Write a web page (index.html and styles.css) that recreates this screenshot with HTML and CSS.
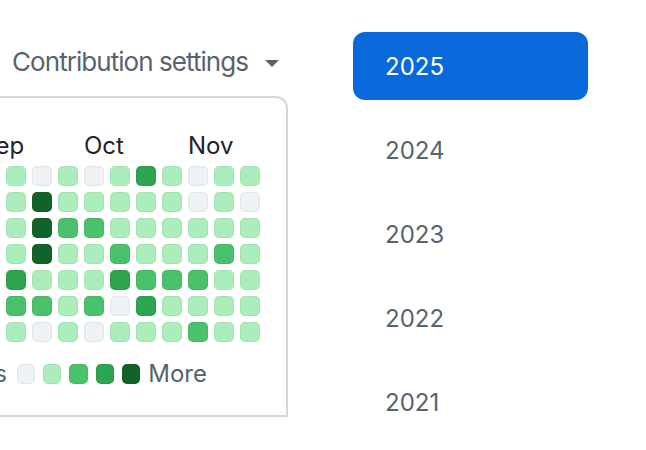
FILE: index.html
```html
<!DOCTYPE html>
<html lang="en">
<head>
<meta charset="utf-8">
<title>Contributions</title>
<link rel="stylesheet" href="styles.css">
</head>
<body>
<div class="page">
  <div class="left">
    <div class="settings">
      <span class="settings-label">Contribution settings</span>
      <svg class="caret" width="14" height="7" viewBox="0 0 14 7"><path d="M0 0h14L7 7z" fill="#59636e"/></svg>
    </div>
    <div class="box">
      <div class="months">
        <span class="month m-sep">Sep</span>
        <span class="month m-oct">Oct</span>
        <span class="month m-nov">Nov</span>
      </div>
      <div class="grid" id="grid"></div>
      <div class="legend">
        <span class="legend-text less">Less</span>
        <span class="cell l0"></span>
        <span class="cell l1"></span>
        <span class="cell l2"></span>
        <span class="cell l3"></span>
        <span class="cell l4"></span>
        <span class="legend-text">More</span>
      </div>
    </div>
  </div>
  <div class="years">
    <a class="year active">2025</a>
    <a class="year">2024</a>
    <a class="year">2023</a>
    <a class="year">2022</a>
    <a class="year">2021</a>
  </div>
</div>
<script src="script.js"></script>
</body>
</html>
```
FILE: script.js
```js
var rows = [
  "111010131011",
  "111411111010",
  "111422111111",
  "111411211121",
  "113111322211",
  "112212031111",
  "111010111211"
];
var grid = document.getElementById('grid');
rows.forEach(function (r) {
  for (var i = 0; i < r.length; i++) {
    var c = document.createElement('span');
    c.className = 'cell l' + r[i];
    grid.appendChild(c);
  }
});
```
FILE: styles.css
```css
html, body {
  margin: 0;
  padding: 0;
  background: #ffffff;
}
body {
  font-family: Inter, "Noto Sans", sans-serif;
  overflow: hidden;
  width: 646px;
  height: 450px;
}
.page {
  display: flex;
  align-items: flex-start;
}
.left {
  width: 288px;
  flex: none;
  padding-top: 45px;
}
.settings {
  display: flex;
  align-items: center;
  justify-content: flex-end;
  gap: 17px;
  padding-right: 9px;
  height: 34px;
  color: #59636e;
  font-size: 26px;
  letter-spacing: -0.95px;
  line-height: 34px;
  white-space: nowrap;
}
.caret {
  flex: none;
  margin-top: 2px;
}
.box {
  margin-top: 17px;
  margin-left: -80px;
  border: 2px solid #d1d9e0;
  border-top-right-radius: 12px;
  padding: 33px 26px 26px 32px;
}
.months {
  display: grid;
  grid-template-columns: repeat(12, 20px);
  column-gap: 6px;
  height: 30px;
  font-size: 24px;
  line-height: 30px;
  color: #1f2328;
  white-space: nowrap;
}
.m-sep { grid-column: 2; }
.m-oct { grid-column: 6; }
.m-nov { grid-column: 10; }
.grid {
  margin-top: 5px;
  display: grid;
  grid-template-columns: repeat(12, 20px);
  grid-auto-rows: 20px;
  gap: 6px;
}
.cell {
  display: block;
  width: 20px;
  height: 20px;
  border-radius: 5px;
  box-shadow: inset 0 0 0 1px rgba(31, 35, 40, 0.06);
}
.l0 { background: #eff2f5; }
.l1 { background: #aceebb; }
.l2 { background: #4ac26b; }
.l3 { background: #2da44e; }
.l4 { background: #116329; }
.legend {
  margin-top: 17px;
  display: flex;
  align-items: center;
  justify-content: flex-end;
  gap: 8px;
  height: 30px;
  margin-right: 53px;
  font-size: 24px;
  line-height: 30px;
  color: #59636e;
}
.less {
  margin-right: 2px;
}
.years {
  margin-left: 65px;
  padding-top: 32px;
  width: 235px;
  display: flex;
  flex-direction: column;
  gap: 16px;
}
.year {
  display: flex;
  align-items: center;
  height: 68px;
  padding-left: 32px;
  border-radius: 12px;
  font-size: 24px;
  color: #59636e;
  text-decoration: none;
}
.year.active {
  background: #0969da;
  color: #ffffff;
}
```
